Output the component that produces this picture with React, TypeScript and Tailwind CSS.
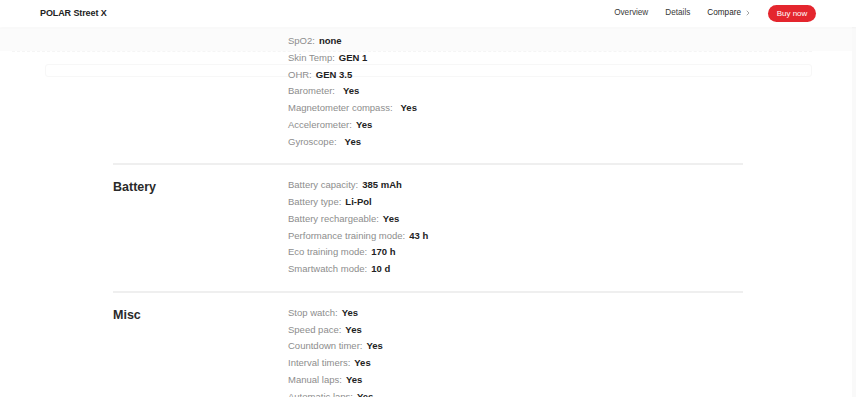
import { ChevronRight } from "lucide-react";

type Spec = { label: string; value: string; wide?: boolean };

const sensors: Spec[] = [
  { label: "SpO2:", value: "none" },
  { label: "Skin Temp:", value: "GEN 1" },
  { label: "OHR:", value: "GEN 3.5" },
  { label: "Barometer:", value: "Yes", wide: true },
  { label: "Magnetometer compass:", value: "Yes", wide: true },
  { label: "Accelerometer:", value: "Yes" },
  { label: "Gyroscope:", value: "Yes", wide: true },
];

const battery: Spec[] = [
  { label: "Battery capacity:", value: "385 mAh" },
  { label: "Battery type:", value: "Li-Pol" },
  { label: "Battery rechargeable:", value: "Yes" },
  { label: "Performance training mode:", value: "43 h" },
  { label: "Eco training mode:", value: "170 h" },
  { label: "Smartwatch mode:", value: "10 d" },
];

const misc: Spec[] = [
  { label: "Stop watch:", value: "Yes" },
  { label: "Speed pace:", value: "Yes" },
  { label: "Countdown timer:", value: "Yes" },
  { label: "Interval timers:", value: "Yes" },
  { label: "Manual laps:", value: "Yes" },
  { label: "Automatic laps:", value: "Yes" },
];

function SpecList({ items }: { items: Spec[] }) {
  return (
    <ul className="text-[9.5px] leading-[16.75px]">
      {items.map((s) => (
        <li key={s.label} className="whitespace-nowrap">
          <span className="text-[#8d8d8d]">{s.label}</span>
          <span
            className={`font-bold text-[#222] ${s.wide ? "ml-[8px]" : "ml-[4px]"}`}
          >
            {s.value}
          </span>
        </li>
      ))}
    </ul>
  );
}

function Section({
  title,
  items,
  divider = true,
  className = "",
}: {
  title?: string;
  items: Spec[];
  divider?: boolean;
  className?: string;
}) {
  return (
    <section
      className={`grid grid-cols-[175px_1fr] ${divider ? "border-b-2 border-[#efefef]" : ""} ${className}`}
    >
      <h2 className="text-[12.5px] leading-[20px] font-bold text-[#2a2a2a]">
        {title}
      </h2>
      <SpecList items={items} />
    </section>
  );
}

export default function App() {
  return (
    <div
      className="h-[397px] overflow-hidden bg-white relative"
      style={{ fontFamily: '"Liberation Sans", Arial, sans-serif' }}
    >
      <header className="relative z-10 h-[27px] bg-white flex items-center justify-between pl-[40px] pr-[40px] shadow-[0_1px_2px_rgba(0,0,0,0.035)]">
        <span className="text-[9px] font-bold text-[#222] tracking-[-0.1px]">
          POLAR Street X
        </span>
        <nav className="flex items-center text-[8.2px] text-[#3a3a3a]">
          <a className="mr-[17px]">Overview</a>
          <a className="mr-[17px]">Details</a>
          <a className="flex items-center text-[#1f1f1f] mr-[16px]">
            Compare
            <ChevronRight className="w-[8px] h-[8px] ml-[3px] text-[#777]" strokeWidth={2} />
          </a>
          <button className="h-[17px] w-[48px] rounded-full bg-[#e4262e] text-white text-[8px]">
            Buy now
          </button>
        </nav>
      </header>

      <main className="relative">
        {/* faded ghost of the sticky sub-navigation */}
        <div className="absolute top-[1px] left-0 right-0 h-[23px] bg-[#fbfbfb]" />
        <div className="absolute top-[24px] left-[12px] w-[800px] border-t border-dashed border-[#f5f5f5]" />
        <div className="absolute top-[37px] left-[45px] w-[767px] h-[13px] rounded-[3px] border border-[#f7f7f7]" />
        <div className="absolute top-0 right-0 w-[4px] h-[370px] bg-[#f9f9f9]" />

        <div className="relative w-[630px] mx-auto">
          <Section items={sensors} className="pt-[6px] pb-[13px]" />
          <Section title="Battery" items={battery} className="pt-[12px] pb-[13px]" />
          <Section title="Misc" items={misc} divider={false} className="pt-[12px]" />
        </div>
      </main>
    </div>
  );
}
